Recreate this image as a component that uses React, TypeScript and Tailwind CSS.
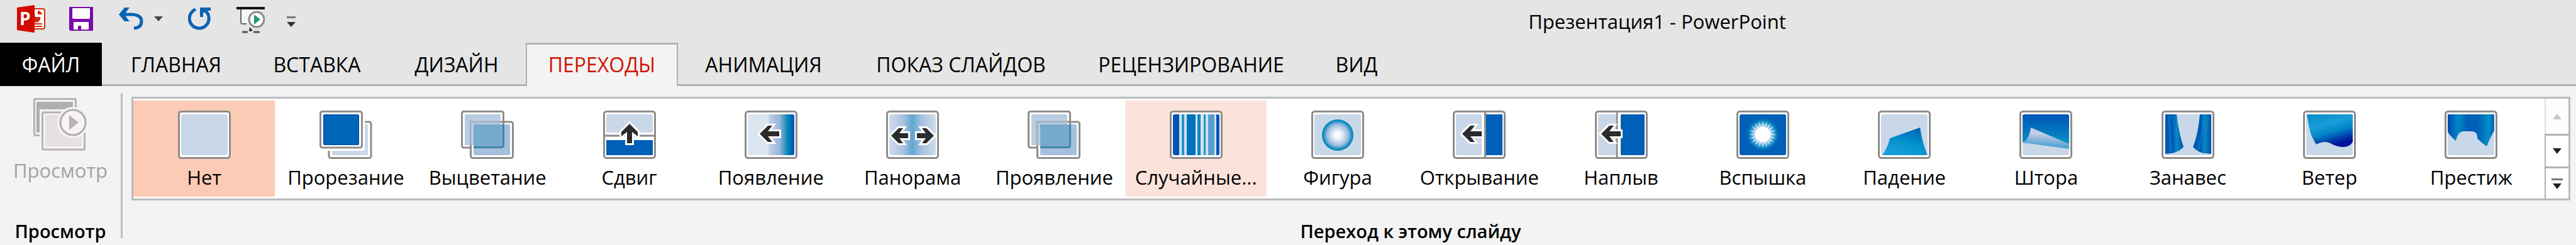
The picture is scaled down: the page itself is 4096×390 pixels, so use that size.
import type { ReactNode } from "react"

const tabs = [
  { name: "ГЛАВНАЯ", width: "w-[224px]" },
  { name: "ВСТАВКА", width: "w-[224px]" },
  { name: "ДИЗАЙН", width: "w-[220px]" },
  { name: "ПЕРЕХОДЫ", width: "w-[242px]", active: true },
  { name: "АНИМАЦИЯ", width: "w-[272px]" },
  { name: "ПОКАЗ СЛАЙДОВ", width: "w-[356px]" },
  { name: "РЕЦЕНЗИРОВАНИЕ", width: "w-[376px]" },
  { name: "ВИД", width: "w-[150px]" },
]

const arrowLeft = "M0 0 L13 -13 H20 L13 -4 H31 V4 H13 L20 13 H13 Z"

function Arrow({ x, y, rotate = 0, short = false }: { x: number; y: number; rotate?: number; short?: boolean }) {
  return (
    <path
      d={short ? "M0 0 L12 -12 H19 L13 -4 H27 V4 H13 L19 12 H12 Z" : arrowLeft}
      transform={`translate(${x} ${y}) rotate(${rotate})`}
      fill="#2b2b2b"
      stroke="#fff"
      strokeWidth="6"
      paintOrder="stroke"
    />
  )
}

function Frame({ children, fill = "#c9d8e8" }: { children?: ReactNode; fill?: string }) {
  return (
    <svg viewBox="0 0 84 77" className="h-[77px] w-[84px]" aria-hidden="true">
      <rect x="1.5" y="1.5" width="81" height="74" rx="4" fill="#fff" stroke="#8f8c89" strokeWidth="3" />
      <rect x="5" y="6" width="74" height="65" rx="3" fill={fill} />
      {children}
    </svg>
  )
}

function CutIcon() {
  return (
    <svg viewBox="0 0 84 77" className="h-[77px] w-[84px]" aria-hidden="true">
      <rect x="15" y="18" width="67" height="57.5" rx="3" fill="#fff" stroke="#8f8c89" strokeWidth="3" />
      <rect x="20" y="22" width="57" height="49" rx="1" fill="#c9d8e8" />
      <rect x="0" y="0" width="72" height="64" fill="#fff" />
      <rect x="1.5" y="1.5" width="66" height="57.5" rx="3" fill="#fff" stroke="#8f8c89" strokeWidth="3" />
      <rect x="7" y="7" width="55" height="47" rx="1" fill="#0067b8" stroke="#0054b4" strokeWidth="2" />
    </svg>
  )
}

function OverlapIcon() {
  return (
    <svg viewBox="0 0 84 77" className="h-[77px] w-[84px]" aria-hidden="true">
      <rect x="1.5" y="1.5" width="66" height="57.5" rx="3" fill="#fff" stroke="#8f8c89" strokeWidth="3" />
      <rect x="15.5" y="18" width="67" height="57.5" rx="3" fill="#fff" stroke="#8f8c89" strokeWidth="3" />
      <rect x="20" y="22" width="58" height="49" rx="1" fill="#a5bfdc" />
      <rect x="6" y="6" width="57" height="49" rx="1" fill="#b9cde1" />
      <path d="M15 55 V18 H63" fill="none" stroke="#a3b1c2" strokeWidth="3" />
      <rect x="20" y="22" width="46" height="36" fill="#78a9cf" />
      <path d="M20 58.5 H64 Q67.5 58.5 67.5 55 V22" fill="none" stroke="#3c88a8" strokeWidth="3" />
      <path d="M67.5 22 V4" stroke="#8f8c89" strokeWidth="3" />
    </svg>
  )
}

function PushIcon() {
  return (
    <Frame fill="#fff">
      <rect x="5" y="6" width="74" height="29" rx="2" fill="#c9d8e8" />
      <path d="M2 40 H82" stroke="#8f8c89" strokeWidth="3" />
      <rect x="5" y="47" width="74" height="24" fill="#005fb8" />
      <Arrow x={42} y={21} rotate={90} />
    </Frame>
  )
}

function FadeInIcon() {
  return (
    <Frame fill="url(#fadeIn)">
      <defs>
        <linearGradient id="fadeIn">
          <stop offset="0" stopColor="#dbe5ef" />
          <stop offset=".44" stopColor="#dbe5ef" />
          <stop offset=".46" stopColor="#c0d0e6" />
          <stop offset=".68" stopColor="#9db5d8" />
          <stop offset=".86" stopColor="#0087b8" />
          <stop offset="1" stopColor="#0050b8" />
        </linearGradient>
      </defs>
      <Arrow x={24} y={37} />
    </Frame>
  )
}

function PanoramaIcon() {
  return (
    <Frame fill="url(#panorama)">
      <defs>
        <linearGradient id="panorama">
          <stop offset="0" stopColor="#cfdceb" />
          <stop offset=".3" stopColor="#a9c1df" />
          <stop offset=".5" stopColor="#5fa8d0" />
          <stop offset=".7" stopColor="#a9c1df" />
          <stop offset="1" stopColor="#cfdceb" />
        </linearGradient>
      </defs>
      <Arrow x={8} y={40} short />
      <Arrow x={76} y={40} rotate={180} short />
    </Frame>
  )
}

function BarsIcon() {
  return (
    <Frame fill="#d3e0ee">
      <path d="M5 9 Q5 6 8 6 H15 V71 H8 Q5 71 5 68 Z" fill="#0053b6" />
      <rect x="19" y="6" width="4" height="65" fill="#1a9ac8" />
      <rect x="27" y="6" width="14" height="65" fill="#0072bc" />
      <rect x="44" y="6" width="5" height="65" fill="#0a8ac0" />
      <rect x="54" y="6" width="3" height="65" fill="#1a9ac8" />
      <rect x="61" y="6" width="10" height="65" fill="#55a0d0" />
      <path d="M74 6 H76 Q79 6 79 9 V68 Q79 71 76 71 H74 Z" fill="#0053b6" />
    </Frame>
  )
}

function ShapeIcon() {
  return (
    <Frame>
      <defs>
        <radialGradient id="shape">
          <stop offset="0" stopColor="#fff" />
          <stop offset=".25" stopColor="#eef4fa" />
          <stop offset=".68" stopColor="#9db9de" />
          <stop offset=".92" stopColor="#0a8cbf" />
          <stop offset="1" stopColor="#0a86b8" />
        </radialGradient>
      </defs>
      <circle cx="42" cy="39" r="25" fill="url(#shape)" />
    </Frame>
  )
}

function UncoverIcon() {
  return (
    <Frame fill="#fff">
      <rect x="5" y="6" width="41" height="65" rx="2" fill="#c9d8e8" />
      <path d="M51.5 2 V75" stroke="#8f8c89" strokeWidth="3" />
      <rect x="53" y="6" width="26" height="65" fill="#0060b8" />
      <Arrow x={15} y={37} />
    </Frame>
  )
}

function CoverIcon() {
  return (
    <Frame fill="#fff">
      <rect x="5" y="6" width="28" height="65" fill="#c9d8e8" />
      <path d="M35 2 V75" stroke="#8f8c89" strokeWidth="3" />
      <rect x="41" y="6" width="38" height="65" rx="2" fill="#0060b8" />
      <Arrow x={10} y={37} />
    </Frame>
  )
}

function FlashIcon() {
  const rays = Array.from({ length: 20 }, (_, i) => i * 18)
  return (
    <Frame fill="#0060b8">
      <defs>
        <radialGradient id="glow">
          <stop offset="0" stopColor="#fff" />
          <stop offset=".5" stopColor="#8fc8ea" />
          <stop offset=".75" stopColor="#0a8ac4" />
          <stop offset="1" stopColor="#0060b8" stopOpacity="0" />
        </radialGradient>
      </defs>
      <circle cx="42" cy="38" r="28" fill="url(#glow)" />
      {rays.map((angle) => (
        <path key={angle} d="M39 38 L42 16 L45 38 Z" fill="#e0e4f6" transform={`rotate(${angle} 42 38)`} />
      ))}
      <circle cx="42" cy="38" r="12" fill="#fff" />
    </Frame>
  )
}

function FallIcon() {
  return (
    <Frame>
      <defs>
        <linearGradient id="fall" x1=".8" y1="0" x2=".35" y2="1">
          <stop offset="0" stopColor="#0060b4" />
          <stop offset=".5" stopColor="#0090cc" />
          <stop offset="1" stopColor="#1a9fd8" />
        </linearGradient>
      </defs>
      <path d="M7 71 Q15 60 19 44 L67 27 Q71 54 79 71 Z" fill="url(#fall)" />
    </Frame>
  )
}

function DrapeIcon() {
  return (
    <Frame>
      <defs>
        <linearGradient id="drape" x1="0" y1="0" x2="0" y2="1">
          <stop offset="0" stopColor="#0055b6" />
          <stop offset="1" stopColor="#0a96c8" />
        </linearGradient>
        <linearGradient id="fold" x1=".5" y1="0" x2=".35" y2="1">
          <stop offset=".3" stopColor="#c3cfe6" />
          <stop offset=".55" stopColor="#8fb7dc" />
          <stop offset="1" stopColor="#2e9ad0" />
        </linearGradient>
      </defs>
      <path d="M5 51 V9 Q5 6 8 6 H76 Q79 6 79 9 V58 Z" fill="url(#drape)" />
      <path d="M5 51 Q16 46 18 27 L79 53 V61 Z" fill="url(#fold)" />
    </Frame>
  )
}

function CurtainsIcon() {
  return (
    <Frame>
      <defs>
        <linearGradient id="curtain">
          <stop offset="0" stopColor="#004bb0" />
          <stop offset=".25" stopColor="#0067b8" />
          <stop offset=".4" stopColor="#0050b2" />
          <stop offset=".62" stopColor="#0a8ac4" />
          <stop offset="1" stopColor="#0050b2" />
        </linearGradient>
      </defs>
      <path d="M6 6 H24 Q28 38 35 58 Q27 66 16 68 L6 69 Z" fill="url(#curtain)" />
      <path d="M79 6 H61 Q58 38 50 58 Q57 66 68 68 L79 69 Z" fill="url(#curtain)" />
      <path d="M11 8 L16 66 M17 8 L26 63 M74 8 L69 66 M68 8 L59 63" stroke="#0a80c0" strokeWidth="1.5" />
    </Frame>
  )
}

function WindIcon() {
  return (
    <Frame>
      <defs>
        <linearGradient id="wind" x1=".3" y1="0" x2=".7" y2="1">
          <stop offset="0" stopColor="#0a90cc" />
          <stop offset=".3" stopColor="#1a9dd8" />
          <stop offset=".55" stopColor="#0085c8" />
          <stop offset=".9" stopColor="#00149c" />
        </linearGradient>
      </defs>
      <path d="M6 6 H79 V50 Q74 58 64 58 Q56 58 47 54 Q35 46 21 54 Q12 40 10 28 Z" fill="url(#wind)" />
    </Frame>
  )
}

function PrestigeIcon() {
  return (
    <Frame>
      <defs>
        <linearGradient id="prestige">
          <stop offset="0" stopColor="#0048b0" />
          <stop offset=".22" stopColor="#0088c6" />
          <stop offset=".42" stopColor="#0060b8" />
          <stop offset=".65" stopColor="#0060b8" />
          <stop offset=".88" stopColor="#0090c8" />
          <stop offset="1" stopColor="#0060b8" />
        </linearGradient>
      </defs>
      <path d="M5 6 H79 V32 Q73 42 67 57 Q58 51 52 44 Q53 33 42 33 H30 Q21 34 18 48 Q10 42 5 34 Z" fill="url(#prestige)" />
    </Frame>
  )
}

const transitions = [
  { name: "Нет", icon: <Frame />, bg: "bg-[#fbcbb5]" },
  { name: "Прорезание", icon: <CutIcon /> },
  { name: "Выцветание", icon: <OverlapIcon /> },
  { name: "Сдвиг", icon: <PushIcon /> },
  { name: "Появление", icon: <FadeInIcon /> },
  { name: "Панорама", icon: <PanoramaIcon /> },
  { name: "Проявление", icon: <OverlapIcon /> },
  { name: "Случайные...", icon: <BarsIcon />, bg: "bg-[#fbe3dc]" },
  { name: "Фигура", icon: <ShapeIcon /> },
  { name: "Открывание", icon: <UncoverIcon /> },
  { name: "Наплыв", icon: <CoverIcon /> },
  { name: "Вспышка", icon: <FlashIcon /> },
  { name: "Падение", icon: <FallIcon /> },
  { name: "Штора", icon: <DrapeIcon /> },
  { name: "Занавес", icon: <CurtainsIcon /> },
  { name: "Ветер", icon: <WindIcon /> },
  { name: "Престиж", icon: <PrestigeIcon /> },
]

function TitleBar() {
  return (
    <header className="flex h-[68px] items-center pb-2 pl-[27px]">
      <svg viewBox="0 0 45 44" className="h-[44px] w-[45px]" aria-label="PowerPoint">
        <rect x="20" y="6" width="24" height="32" rx="3" fill="#fff" stroke="#d42a08" strokeWidth="2" />
        <path d="M28 14 A7 7 0 1 0 37 19 H29 Z" fill="#d42a08" />
        <path d="M33 9 A8 8 0 0 1 40 15 H33 Z" fill="#d42a08" />
        <path d="M28 30 H40 M28 34 H40" stroke="#d42a08" strokeWidth="2" />
        <path d="M0 4 L28 0 V44 L0 40 Z" fill="#d20a00" />
        <text x="4" y="32" fontSize="28" fontWeight="700" fill="#fff">
          P
        </text>
      </svg>
      <button aria-label="Сохранить" className="ml-[38px]">
        <svg viewBox="0 0 38 38" className="size-[38px]">
          <path d="M0 0 H38 V38 H2 L0 36 Z" fill="#7a0cab" />
          <path d="M5 2 H33 V17 Q33 19 31 19 H7 Q5 19 5 17 Z" fill="#fff" />
          <path d="M7 24 H31 V36 H19 V30 H14 V36 H7 Z" fill="#fff" />
        </svg>
      </button>
      <button aria-label="Отменить" className="ml-[41px]">
        <svg viewBox="0 0 39 36" className="h-[36px] w-[39px]">
          <path d="M0 11 L9 0 H17 L11 8 V14 L17 22 H9 Z" fill="#0a62b5" />
          <path d="M9 11 H21 Q36 12 36 22 Q36 32 24 33" fill="none" stroke="#0a62b5" strokeWidth="5" />
        </svg>
      </button>
      <button aria-label="Список отмены" className="ml-[17px]">
        <svg viewBox="0 0 14 8" className="h-[8px] w-[14px]">
          <path d="M0 0 H14 L7 8 Z" fill="#444" />
        </svg>
      </button>
      <button aria-label="Повторить" className="ml-[40px]">
        <svg viewBox="0 0 37 36" className="h-[36px] w-[37px]">
          <path d="M12 3 A15.5 15.5 0 1 0 27 5" fill="none" stroke="#0a62b5" strokeWidth="5" />
          <path d="M19 0 H36 V5 L29 5 L24 9 V15 L19 15 Z" fill="#0a62b5" />
        </svg>
      </button>
      <button aria-label="С начала" className="ml-[40px] pt-1">
        <svg viewBox="0 0 45 42" className="h-[42px] w-[45px]">
          <path d="M7 4 H37 V26 H7 Z" fill="#f4f4f4" />
          <path d="M0 2 H45" stroke="#111" strokeWidth="4" />
          <path d="M7 4 V24 Q7 27 10 27 H16" fill="none" stroke="#666" strokeWidth="2" />
          <path d="M9 40 H18 M27 40 H37" fill="none" stroke="#555" strokeWidth="3" />
          <path d="M21 32 L26 38 L20 39 Z" fill="#222" />
          <circle cx="32" cy="20" r="12" fill="#fff" stroke="#888" strokeWidth="3" />
          <path d="M28 12 L38 20 L28 28 Z" fill="#1a9a80" />
        </svg>
      </button>
      <button aria-label="Настройка панели" className="ml-[35px] pt-2">
        <svg viewBox="0 0 14 17" className="h-[17px] w-[14px]">
          <path d="M0 1.5 H14" stroke="#777" strokeWidth="3" />
          <path d="M0 9 H14 L7 17 Z" fill="#333" />
        </svg>
      </button>
      <h1 className="flex-1 pl-[704px] pt-2 text-center text-[31px] leading-10">Презентация1 - PowerPoint</h1>
    </header>
  )
}

function TabBar() {
  return (
    <nav className="flex h-[69px] text-[32px] leading-10">
      <button className="w-[162px] bg-black text-white">ФАЙЛ</button>
      <div className="w-[6px] border-b-3 border-[#b1b1b1]" />
      {tabs.map((tab) => (
        <button
          key={tab.name}
          className={`${tab.width} shrink-0 whitespace-nowrap border-[#b1b1b1] ${
            tab.active ? "border-x-2 border-t-3 bg-[#f3f3f3] pb-[3px] text-[#d01400]" : "border-b-3 pt-[3px] font-medium"
          }`}
        >
          {tab.name}
        </button>
      ))}
      <div className="flex-1 border-b-3 border-[#b1b1b1]" />
    </nav>
  )
}

function Gallery() {
  return (
    <div className="flex h-[165px] border-3 border-[#b8bbbe] bg-white">
      <div className="grid flex-1 grid-cols-17 py-[3px] pr-1">
        {transitions.map((item) => (
          <button key={item.name} className={`flex flex-col items-center pt-4 ${item.bg ?? ""}`}>
            {item.icon}
            <span className="pt-[9px] text-[31px] leading-10">{item.name}</span>
          </button>
        ))}
      </div>
      <div className="grid w-[38px] grid-rows-[56px_55px_1fr]">
        <button disabled aria-label="Вверх" className="flex items-center justify-center border-l-2 border-[#dedede] bg-[#fdfdfd]">
          <svg viewBox="0 0 14 9" className="h-[9px] w-[14px]">
            <path d="M7 0 L14 9 H0 Z" fill="#c4c4c4" />
          </svg>
        </button>
        <button aria-label="Вниз" className="flex items-center justify-center border-y-3 border-l-2 border-[#b1b1b1]">
          <svg viewBox="0 0 14 9" className="h-[9px] w-[14px]">
            <path d="M0 0 H14 L7 9 Z" fill="#222" />
          </svg>
        </button>
        <button aria-label="Дополнительно" className="flex items-center justify-center border-l-2 border-[#b1b1b1]">
          <svg viewBox="0 0 18 17" className="h-[17px] w-[18px]">
            <path d="M0 1.5 H18" stroke="#777" strokeWidth="3" />
            <path d="M2 8 H16 L9 17 Z" fill="#222" />
          </svg>
        </button>
      </div>
    </div>
  )
}

export default function App() {
  return (
    <div className="min-h-screen bg-[#e5e5e5] font-['Open_Sans','Noto_Sans',sans-serif] text-black">
      <TitleBar />
      <TabBar />
      <main className="flex h-[253px] bg-[#f3f3f3]">
        <section className="flex w-[192px] flex-col items-center justify-between pb-[2px] pt-[19px]">
          <button disabled className="flex flex-col items-center text-[#a3a3a3]">
            <svg viewBox="0 0 85 84" className="h-[84px] w-[85px]" aria-hidden="true">
              <rect x="1.5" y="1.5" width="66" height="58" rx="2" fill="#f3f3f3" stroke="#b5b3b3" strokeWidth="3" />
              <rect x="5" y="6" width="58" height="49" fill="#b0aeae" />
              <rect x="10" y="18" width="75" height="66" fill="#f3f3f3" />
              <rect x="14.5" y="23" width="67" height="59" rx="2" fill="#f6f3f5" stroke="#b5b3b3" strokeWidth="3" />
              <rect x="19" y="27" width="58" height="50" fill="#e6e0e4" />
              <circle cx="63" cy="39" r="25" fill="#f3f3f3" />
              <circle cx="63" cy="39" r="20" fill="#f8f3f7" stroke="#b0aeae" strokeWidth="3" />
              <path d="M57 27 L72 39 L57 51 Z" fill="#b5b3b5" />
            </svg>
            <span className="pt-[11px] text-[31px] leading-10">Просмотр</span>
          </button>
          <h2 className="text-[29px] font-semibold leading-10">Просмотр</h2>
        </section>
        <div className="mb-[11px] mt-3 w-[3px] bg-[#bcbcbc]" />
        <section className="flex flex-1 flex-col justify-between pb-[2px] pl-[14px] pr-[9px] pt-[17px]">
          <Gallery />
          <h2 className="pl-[190px] text-center text-[29px] font-semibold leading-10">Переход к этому слайду</h2>
        </section>
      </main>
    </div>
  )
}
